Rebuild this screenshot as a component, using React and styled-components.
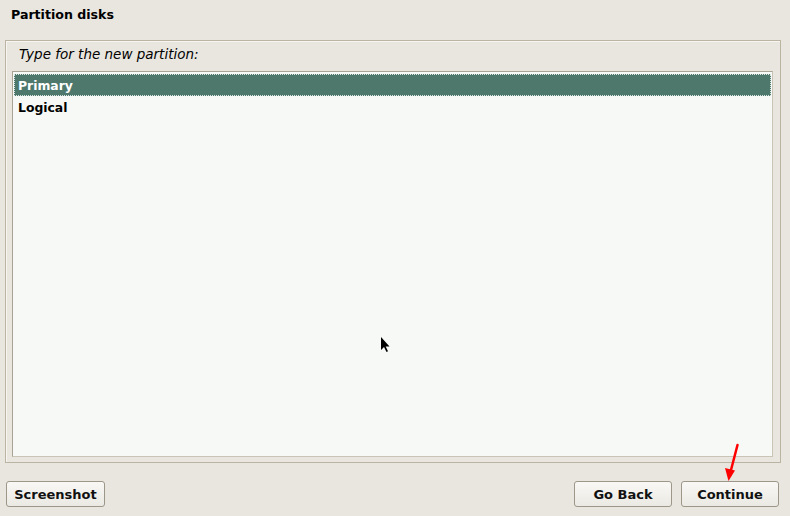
import React from 'react';
import styled, { createGlobalStyle } from 'styled-components';

const GlobalStyle = createGlobalStyle`
  html, body {
    margin: 0;
    padding: 0;
    background: #e8e6df;
  }
  * {
    box-sizing: border-box;
  }
`;

const Page = styled.div`
  width: 790px;
  height: 516px;
  display: flex;
  flex-direction: column;
  position: relative;
  font-family: 'DejaVu Sans', 'Liberation Sans', sans-serif;
  font-size: 13px;
  color: #000;
  overflow: hidden;
`;

const Title = styled.h1`
  margin: 0;
  height: 40px;
  padding: 7px 11px 0;
  font-size: 12.6px;
  font-weight: 700;
`;

const Frame = styled.div`
  height: 423px;
  margin: 0 9px 0 5px;
  border: 1px solid #bbb4a3;
  box-shadow: inset 1px 1px 0 #f6f5f1;
  padding: 5px 7px 5px 6px;
  display: flex;
  flex-direction: column;
`;

const Prompt = styled.p`
  margin: 0;
  height: 25px;
  padding-left: 7px;
  font-size: 13.5px;
  font-style: italic;
  line-height: 16px;
`;

const ListBox = styled.ul`
  flex: 1;
  margin: 0;
  padding: 2px 1px;
  list-style: none;
  background: #f6f9f5;
  border: 1px solid #a9a496;
  border-right-color: #c9c4b6;
  border-bottom-color: #c9c4b6;
`;

const Row = styled.li`
  height: 22px;
  line-height: 21px;
  padding-left: 3px;
  font-size: 12.4px;
  font-weight: 700;
  color: ${(p) => (p.$selected ? '#ffffff' : '#000000')};
  background: ${(p) => (p.$selected ? '#4e786c' : 'transparent')};
  border: 1px dotted ${(p) => (p.$selected ? '#d8e4df' : 'transparent')};
`;

const Footer = styled.div`
  flex: 1;
  display: flex;
  align-items: flex-start;
  padding: 18px 11px 0 6px;
  gap: 9px;
`;

const Spacer = styled.div`
  flex: 1;
`;

const Button = styled.button`
  width: ${(p) => p.$width || 98}px;
  height: 26px;
  padding: 0;
  border: 1px solid #9d978a;
  border-radius: 3px;
  background: linear-gradient(#f9f8f5, #ebe9e3);
  font-family: 'DejaVu Sans', 'Liberation Sans', sans-serif;
  font-size: 13px;
  font-weight: 700;
  color: #111;
`;

const Overlay = styled.svg`
  position: absolute;
  left: ${(p) => p.$x}px;
  top: ${(p) => p.$y}px;
  pointer-events: none;
`;

export default function App() {
  return (
    <>
      <GlobalStyle />
      <Page>
        <Title>Partition disks</Title>
        <Frame>
          <Prompt>Type for the new partition:</Prompt>
          <ListBox>
            <Row $selected>Primary</Row>
            <Row>Logical</Row>
          </ListBox>
        </Frame>
        <Footer>
          <Button $width={99}>Screenshot</Button>
          <Spacer />
          <Button>Go Back</Button>
          <Button>Continue</Button>
        </Footer>
        <Overlay $x={378} $y={335} width="14" height="20" viewBox="0 0 14 20">
          <path d="M3 2 L3 15 L6 12 L8.5 17 L10 16.3 L7.7 11.5 L11.5 11.5 Z" fill="#000" />
        </Overlay>
        <Overlay $x={718} $y={442} width="24" height="42" viewBox="0 0 24 42">
          <line x1="19.5" y1="3" x2="13" y2="28" stroke="#ff0000" strokeWidth="2.5" strokeLinecap="round" />
          <path d="M7 26 L17 28.5 L10.5 39 Z" fill="#ff0000" />
        </Overlay>
      </Page>
    </>
  );
}
